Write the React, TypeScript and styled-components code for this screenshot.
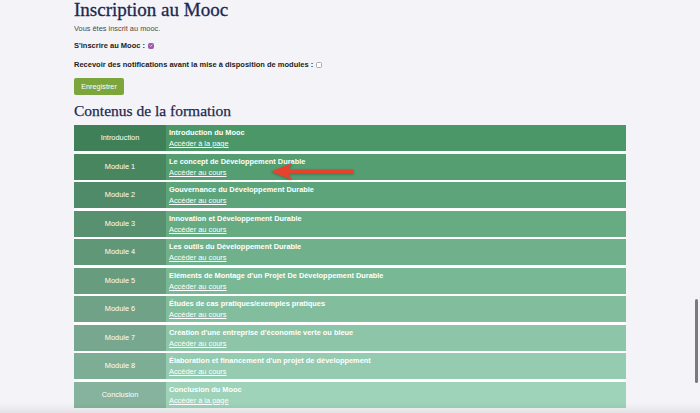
import React from "react";
import styled, { createGlobalStyle } from "styled-components";

const GlobalStyle = createGlobalStyle`
  html, body {
    margin: 0;
    padding: 0;
    background: #f4f4f8;
    overflow: hidden;
  }
  body {
    font-family: "Liberation Sans", Arial, sans-serif;
  }
`;

const Page = styled.div`
  position: relative;
  width: 700px;
  height: 413px;
  overflow: hidden;
  background: #f4f4f8;
  padding-left: 74px;
  box-sizing: border-box;
`;

const Title = styled.h1`
  margin: 0;
  font-family: "Liberation Serif", "Times New Roman", serif;
  font-weight: normal;
  font-size: 19px;
  line-height: 20px;
  color: #1b2850;
  -webkit-text-stroke: 0.3px #1b2850;
`;

const SubTitle = styled.h2`
  margin: 7px 0 0;
  font-family: "Liberation Serif", "Times New Roman", serif;
  font-weight: normal;
  font-size: 15.5px;
  line-height: 18px;
  color: #1b2850;
  -webkit-text-stroke: 0.25px #1b2850;
`;

const Info = styled.p`
  margin: 3.5px 0 0;
  font-size: 7.4px;
  line-height: 10px;
  color: #4a4a4a;
`;

const FieldRow = styled.div<{ $gap: number }>`
  margin-top: ${(p) => p.$gap}px;
  display: flex;
  align-items: center;
  gap: 3px;
  font-size: 7.5px;
  line-height: 10px;
  font-weight: bold;
  color: #222;
`;

const Box = styled.span<{ $checked?: boolean }>`
  display: inline-flex;
  align-items: center;
  justify-content: center;
  width: 6px;
  height: 6px;
  box-sizing: border-box;
  border-radius: 1.5px;
  background: ${(p) => (p.$checked ? "#a35aae" : "#ffffff")};
  border: 0.7px solid ${(p) => (p.$checked ? "#a35aae" : "#a8a8a8")};
`;

const SaveButton = styled.button`
  margin-top: 8px;
  display: block;
  width: 50px;
  height: 17.5px;
  padding: 0;
  border: none;
  border-radius: 2px;
  background: #7ca63c;
  color: #ffffff;
  font-family: "Liberation Sans", Arial, sans-serif;
  font-size: 7.3px;
  line-height: 17.5px;
  text-align: center;
`;

const List = styled.div`
  margin-top: 5px;
  width: 552px;
  display: flex;
  flex-direction: column;
  gap: 2.5px;
  background: #ffffff;
`;

const Row = styled.div`
  display: grid;
  grid-template-columns: 92px 1fr;
  height: 26px;
  color: #ffffff;
  font-size: 7.4px;
`;

const Label = styled.div`
  display: flex;
  align-items: center;
  justify-content: center;
  line-height: 10px;
`;

const Body = styled.div`
  padding: 2px 0 0 3px;
  display: flex;
  flex-direction: column;
  line-height: 11px;
`;

const RowTitle = styled.span`
  font-weight: bold;
`;

const RowLink = styled.a`
  color: #ffffff;
  text-decoration: underline;
  text-underline-offset: 1px;
  text-decoration-thickness: 0.6px;
  align-self: flex-start;
`;

const Arrow = styled.svg`
  position: absolute;
  left: 266px;
  top: 158px;
  width: 94px;
  height: 26px;
  filter: drop-shadow(0 1px 1px rgba(0, 0, 0, 0.25));
`;

const ScrollThumb = styled.div`
  position: absolute;
  right: 2px;
  top: 299px;
  width: 2.6px;
  height: 84px;
  border-radius: 2px;
  background: #7a7a7a;
`;

const BottomShade = styled.div`
  position: absolute;
  left: 0;
  right: 0;
  bottom: 0;
  height: 10px;
  background: linear-gradient(to bottom, rgba(0, 0, 0, 0), rgba(0, 0, 0, 0.07));
  pointer-events: none;
`;

const rows = [
  { label: "Introduction", title: "Introduction du Mooc", link: "Accéder à la page" },
  { label: "Module 1", title: "Le concept de Développement Durable", link: "Accéder au cours" },
  { label: "Module 2", title: "Gouvernance du Développement Durable", link: "Accéder au cours" },
  { label: "Module 3", title: "Innovation et Développement Durable", link: "Accéder au cours" },
  { label: "Module 4", title: "Les outils du Développement Durable", link: "Accéder au cours" },
  { label: "Module 5", title: "Eléments de Montage d'un Projet De Développement Durable", link: "Accéder au cours" },
  { label: "Module 6", title: "Études de cas pratiques/exemples pratiques", link: "Accéder au cours" },
  { label: "Module 7", title: "Création d'une entreprise d'économie verte ou bleue", link: "Accéder au cours" },
  { label: "Module 8", title: "Élaboration et financement d'un projet de développement", link: "Accéder au cours" },
  { label: "Conclusion", title: "Conclusion du Mooc", link: "Accéder à la page" },
];

const start = [75, 151, 104];
const end = [158, 210, 185];

function colorAt(i: number, factor: number) {
  const t = i / (rows.length - 1);
  const c = start.map((s, k) => Math.round((s + (end[k] - s) * t) * factor));
  return `rgb(${c[0]}, ${c[1]}, ${c[2]})`;
}

export default function App() {
  return (
    <>
      <GlobalStyle />
      <Page>
        <Title>Inscription au Mooc</Title>
        <Info>Vous êtes inscrit au mooc.</Info>
        <FieldRow $gap={7}>
          <span>S'inscrire au Mooc :</span>
          <Box $checked>
            <svg width="5" height="5" viewBox="0 0 10 10">
              <path d="M2 5.2 L4.2 7.4 L8.2 2.6" fill="none" stroke="#fff" strokeWidth="1.6" />
            </svg>
          </Box>
        </FieldRow>
        <FieldRow $gap={9}>
          <span>Recevoir des notifications avant la mise à disposition de modules :</span>
          <Box />
        </FieldRow>
        <SaveButton>Enregistrer</SaveButton>
        <SubTitle>Contenus de la formation</SubTitle>
        <List>
          {rows.map((r, i) => (
            <Row key={r.label}>
              <Label style={{ background: colorAt(i, 0.85) }}>{r.label}</Label>
              <Body style={{ background: colorAt(i, 1) }}>
                <RowTitle>{r.title}</RowTitle>
                <RowLink href="#">{r.link}</RowLink>
              </Body>
            </Row>
          ))}
        </List>
        <Arrow viewBox="266 158 94 26">
          <path
            d="M271 171.5 L292 163 L288.5 169.6 L353.5 169.6 L353.5 173.6 L288.5 173.6 L292 180 Z"
            fill="#e5432d"
          />
        </Arrow>
        <ScrollThumb />
        <BottomShade />
      </Page>
    </>
  );
}
